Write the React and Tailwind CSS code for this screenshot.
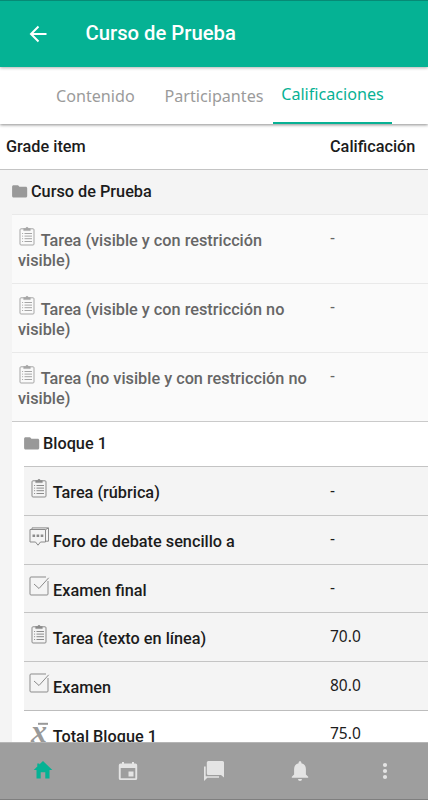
const restricted = [
  { name: "Tarea (visible y con restricción visible)", grade: "-" },
  { name: "Tarea (visible y con restricción no visible)", grade: "-" },
  { name: "Tarea (no visible y con restricción no visible)", grade: "-" },
];

const items = [
  { icon: "assign", name: "Tarea (rúbrica)", grade: "-" },
  { icon: "forum", name: "Foro de debate sencillo a", grade: "-" },
  { icon: "quiz", name: "Examen final", grade: "-" },
  { icon: "assign", name: "Tarea (texto en línea)", grade: "70.0" },
  { icon: "quiz", name: "Examen", grade: "80.0" },
];

function FolderIcon() {
  return (
    <svg className="-translate-y-px" width="16" height="13" viewBox="0 0 16 13" fill="#999">
      <path d="M1.6 0.3h4.1c.5 0 .8.2 1.1.6l.6.9h6.3c.9 0 1.5.6 1.5 1.5v7.7c0 .9-.6 1.5-1.5 1.5H1.6C.7 12.5.1 11.9.1 11V1.8C.1.9.7.3 1.6.3z" />
    </svg>
  );
}

function ItemIcon({ type, className = "" }) {
  return (
    <svg
      className={`inline overflow-visible align-baseline ${className}`}
      width="19"
      height="20"
      viewBox="0.5 0 19 20"
      fill="none"
      stroke="#8b8b8b"
    >
      {type === "assign" && (
        <>
          <rect x="2.5" y="2.8" width="14" height="16.2" rx="1" />
          <path d="M6.2 4.6V2.600h2a1.300 1.300 0 0 1 2.600 0h2v2z" fill="#8b8b8b" strokeWidth="0.5" />
          <path d="M7 7.500h7.500M7 10.100h7.500M7 12.700h7.500M7 15.500h7.500" />
          <path d="M4.600 7.500h1M4.600 10.100h1M4.600 12.700h1M4.600 15.500h1" />
        </>
      )}
      {type === "forum" && (
        <>
          <path d="M0.5 2.500h15.500v12.500h-5l-2.500 3.200-2.500-3.200H0.500z" />
          <path d="M2.500 2V0.900h16.500v13.300h-2.500M16.300 2.500l2.500-1.500" />
          <path d="M3 8.700h2.600M7.100 8.700h2.600M11.200 8.700h2.600" strokeWidth="2.4" />
        </>
      )}
      {type === "quiz" && (
        <>
          <path d="M16.500 1H1.500a1 1 0 0 0-1 1v16a1 1 0 0 0 1 1h16a1 1 0 0 0 1-1V5" />
          <path d="M4.500 8l5 4.500L19.200 1.800" />
        </>
      )}
    </svg>
  );
}

function Tab({ label, active, className }) {
  return (
    <div
      className={`flex h-full items-center text-[16.15px] whitespace-nowrap ${className} ${
        active
          ? "border-b-[2px] border-[#07b194] pb-[1px] text-[#07b194]"
          : "pt-[1px] text-[#9b9b9b]"
      }`}
    >
      {label}
    </div>
  );
}

function Grade({ children }) {
  return <div className="w-[98px] shrink-0 font-['Noto_Sans'] text-[15.5px] leading-[20px]">{children}</div>;
}

function Header() {
  return (
    <header className="relative z-10 flex h-[67px] shrink-0 items-center border-t border-[#078a75] bg-[#05b294] text-white shadow-[0_1px_3px_rgba(0,0,0,0.3)]">
      <svg className="ml-[29px]" width="18" height="18" viewBox="0 0 18 18" fill="none" stroke="white" strokeWidth="2">
        <path d="M17.500 9H2.500M9.500 1.500L2 9l7.500 7.500" />
      </svg>
      <h1 className="ml-[38.5px] -translate-y-px text-[20.25px] font-medium">Curso de Prueba</h1>
    </header>
  );
}

function TabBar() {
  return (
    <nav className="relative z-[5] flex h-[57px] shrink-0 bg-white font-['Noto_Sans'] shadow-[0_1px_3px_rgba(0,0,0,0.45)]">
      <Tab label="Contenido" className="ml-[56px] w-[108.5px]" />
      <Tab label="Participantes" className="w-[108.5px]" />
      <Tab label="Calificaciones" className="w-[119px] justify-center" active />
    </nav>
  );
}

function BottomBar() {
  return (
    <nav className="relative z-10 grid h-[58px] shrink-0 grid-cols-5 items-center justify-items-center border-t border-b border-t-[#b5b5b5] border-b-[#7f7f7f] bg-[#9e9e9e] text-[#e4e4e4]">
      <svg width="20" height="20" viewBox="0 0 20 20" fill="#05b294" className="-translate-y-px">
        <path d="M10 1l9.300 9H16.500v8.500h-4.200v-6.200H7.700v6.200H3.500V10H.7L4.300 6.500V3.500h2v1z" />
      </svg>
      <svg width="20" height="20" viewBox="0 0 20 20" fill="currentColor">
        <path fillRule="evenodd" d="M4 1h2v1.500h8V1h2v1.500h1.500a1.700 1.700 0 0 1 1.700 1.700v13.200a1.700 1.700 0 0 1-1.700 1.700h-15A1.700 1.700 0 0 1 .8 17.400V4.200a1.700 1.700 0 0 1 1.700-1.700H4zM2.700 7v10.200h14.600V7z" />
        <rect x="10.5" y="10.5" width="5" height="5" />
      </svg>
      <svg width="22" height="22" viewBox="0 0 22 22" fill="currentColor">
        <path d="M5.300 1H19.500a1.500 1.500 0 0 1 1.500 1.500V17.500l-3-2.500H5.300A1.500 1.500 0 0 1 3.800 13.500V2.500A1.500 1.500 0 0 1 5.300 1z" />
        <path d="M1 6.500h1.700v9.700h13.300v1.600H4.300L1 21z" />
      </svg>
      <svg width="18" height="20" viewBox="0 0 18 20" fill="currentColor">
        <path d="M9 .3c.9 0 1.400.6 1.400 1.500v.5c3 .7 4.500 3 4.500 5.800v5.400l2.300 2.200v1H.8v-1l2.300-2.200V8.100c0-2.800 1.500-5.100 4.500-5.800v-.5C7.600.9 8.100.3 9 .3zM7 17.900h4a2 2 0 0 1-4 0z" />
      </svg>
      <svg width="6" height="18" viewBox="0 0 6 18" fill="currentColor">
        <circle cx="3" cy="3" r="2.1" />
        <circle cx="3" cy="9" r="2.1" />
        <circle cx="3" cy="15" r="2.1" />
      </svg>
    </nav>
  );
}

export default function App() {
  return (
    <div className="flex h-[800px] w-[428px] flex-col overflow-hidden bg-white font-['Roboto'] text-[#1c1c1c]">
      <Header />
      <TabBar />
      <main className="min-h-0 flex-1 overflow-hidden text-[16.28px] leading-[20px]">
        <div className="flex h-[46px] items-center border-b border-[#c4c4c4] pl-[6px] font-medium">
          <div className="w-[324px]">Grade item</div>
          <div>Calificación</div>
        </div>
        <div className="bg-[#f4f4f4] pl-3">
          <div className="flex h-[44px] items-center gap-[3px] font-medium">
            <FolderIcon />
            <span>Curso de Prueba</span>
          </div>
          {restricted.map((item) => (
            <div
              key={item.name}
              className="flex h-[69px] border-t border-[#e9e9e9] bg-[#fafafa] pl-[6px] text-[#666] first-of-type:border-[#dcdcdc]"
            >
              <div className="w-[312px] shrink-0 pt-[11px] pr-5 font-medium">
                <ItemIcon type="assign" className="opacity-75" /> {item.name}
              </div>
              <div className="pt-[12px]">
                <Grade>{item.grade}</Grade>
              </div>
            </div>
          ))}
          <div className="border-t border-[#cacaca] bg-white pl-3">
            <div className="flex h-[44px] items-center gap-[3px] font-medium">
              <FolderIcon />
              <span>Bloque 1</span>
            </div>
            {items.map((item) => (
              <div
                key={item.name}
                className="flex h-[48.8px] border-t border-[#c4c4c4] bg-[#f4f4f4] pl-[6px]"
              >
                <div className="w-[300px] shrink-0 pt-[11px] font-medium">
                  <ItemIcon type={item.icon} /> {item.name}
                </div>
                <div className="pt-[12.5px]">
                  <Grade>{item.grade}</Grade>
                </div>
              </div>
            ))}
            <div className="flex h-[48.8px] border-t border-[#bdbdbd] bg-white pl-[6px]">
              <div className="w-[300px] shrink-0 pt-[11px] font-medium">
                <svg className="inline overflow-visible align-baseline" width="19" height="20" viewBox="0 0 19 20">
                  <rect x="8" y="0.8" width="10" height="2" fill="#999" />
                  <text
                    x="1"
                    y="19.5"
                    fontSize="32"
                    fontStyle="italic"
                    fontWeight="bold"
                    fontFamily="Liberation Serif"
                    fill="#999"
                  >
                    x
                  </text>
                </svg>{" "}
                Total Bloque 1
              </div>
              <div className="pt-[12.5px]">
                <Grade>75.0</Grade>
              </div>
            </div>
          </div>
        </div>
      </main>
      <BottomBar />
    </div>
  );
}
